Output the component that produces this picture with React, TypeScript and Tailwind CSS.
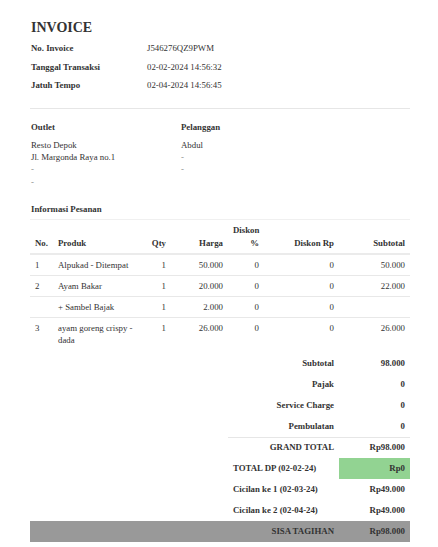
const info = [
  { label: "No. Invoice", value: "J546276QZ9PWM" },
  { label: "Tanggal Transaksi", value: "02-02-2024 14:56:32" },
  { label: "Jatuh Tempo", value: "02-04-2024 14:56:45" },
];

const items = [
  { no: "1", name: "Alpukad - Ditempat", qty: "1", price: "50.000", pct: "0", disc: "0", sub: "50.000" },
  { no: "2", name: "Ayam Bakar", qty: "1", price: "20.000", pct: "0", disc: "0", sub: "22.000" },
  { no: "", name: "+ Sambel Bajak", qty: "1", price: "2.000", pct: "0", disc: "0", sub: "" },
  { no: "3", name: "ayam goreng crispy - dada", qty: "1", price: "26.000", pct: "0", disc: "0", sub: "26.000" },
];

const cols = "grid grid-cols-[23px_87px_31px_57px_36px_75px_71px]";

export default function App() {
  return (
    <div className="min-h-[547px] w-[438px] bg-white font-['Liberation_Serif',serif] text-[8.8px] text-[#333]">
      <div className="w-[380px] pl-[30px] pt-[18px] box-content">
        <h1 className="h-[19px] pl-px text-[14px] font-bold leading-[19px] text-[#333]">INVOICE</h1>

        <div className="mt-[2px] pl-px">
          {info.map((r) => (
            <div key={r.label} className="grid grid-cols-[116px_1fr] leading-[18.5px]">
              <span className="font-bold">{r.label}</span>
              <span>{r.value}</span>
            </div>
          ))}
        </div>

        <div className="mt-[13px] border-t border-[#e6e6e6]" />

        <div className="mt-[12px] grid grid-cols-[150px_1fr] pl-px leading-[12.3px]">
          <div>
            <p className="font-bold">Outlet</p>
            <div className="mt-[6px]">
              <p>Resto Depok</p>
              <p>Jl. Margonda Raya no.1</p>
              <p className="text-[#888]">-</p>
              <p className="text-[#888]">-</p>
            </div>
          </div>
          <div>
            <p className="font-bold">Pelanggan</p>
            <div className="mt-[6px]">
              <p>Abdul</p>
              <p className="text-[#888]">-</p>
              <p className="text-[#888]">-</p>
            </div>
          </div>
        </div>

        <p className="mt-[15px] pl-px font-bold leading-[12.3px]">Informasi Pesanan</p>

        <div className="mt-[4px] border-t border-[#f0f0f0]">
          <div className={`${cols} items-end border-b-2 border-[#ebebeb] py-[4px] font-bold leading-[12.3px]`}>
            <span className="px-[5px]">No.</span>
            <span className="px-[5px]">Produk</span>
            <span className="px-[5px] text-right">Qty</span>
            <span className="px-[5px] text-right">Harga</span>
            <span className="px-[5px] text-right">Diskon %</span>
            <span className="px-[5px] text-right">Diskon Rp</span>
            <span className="px-[5px] text-right">Subtotal</span>
          </div>
          {items.map((it, i) => (
            <div
              key={i}
              className={`${cols} py-[4px] leading-[12px] ${i < items.length - 1 ? "border-b border-[#e8e8e8]" : ""}`}
            >
              <span className="px-[5px]">{it.no}</span>
              <span className="px-[5px]">{it.name}</span>
              <span className="px-[5px] text-right">{it.qty}</span>
              <span className="px-[5px] text-right">{it.price}</span>
              <span className="px-[5px] text-right">{it.pct}</span>
              <span className="px-[5px] text-right">{it.disc}</span>
              <span className="px-[5px] text-right">{it.sub}</span>
            </div>
          ))}
        </div>

        <div className="mt-[3px] grid grid-cols-[198px_111px_71px] font-bold">
          {[
            ["Subtotal", "98.000"],
            ["Pajak", "0"],
            ["Service Charge", "0"],
            ["Pembulatan", "0"],
          ].map(([l, v]) => (
            <div key={l} className="col-span-3 grid h-[21px] grid-cols-subgrid items-center">
              <span />
              <span className="px-[5px] text-right">{l}</span>
              <span className="px-[5px] text-right">{v}</span>
            </div>
          ))}
          <div className="col-span-3 grid h-[21px] grid-cols-subgrid">
            <span />
            <span className="flex items-center justify-end border-t border-[#e6e6e6] px-[5px]">GRAND TOTAL</span>
            <span className="flex items-center justify-end border-t border-[#e6e6e6] px-[5px]">Rp98.000</span>
          </div>
          <div className="col-span-3 grid h-[21px] grid-cols-subgrid items-center">
            <span />
            <span className="px-[5px]">TOTAL DP (02-02-24)</span>
            <span className="flex h-full items-center justify-end bg-[#92d392] px-[5px]">Rp0</span>
          </div>
          <div className="col-span-3 grid h-[21px] grid-cols-subgrid items-center">
            <span />
            <span className="px-[5px]">Cicilan ke 1 (02-03-24)</span>
            <span className="px-[5px] text-right">Rp49.000</span>
          </div>
          <div className="col-span-3 grid h-[21px] grid-cols-subgrid items-center">
            <span />
            <span className="px-[5px]">Cicilan ke 2 (02-04-24)</span>
            <span className="px-[5px] text-right">Rp49.000</span>
          </div>
          <div className="col-span-3 grid h-[21px] grid-cols-subgrid items-center bg-[#999999]">
            <span />
            <span className="px-[5px] text-right">SISA TAGIHAN</span>
            <span className="px-[5px] text-right">Rp98.000</span>
          </div>
        </div>
      </div>
    </div>
  );
}
